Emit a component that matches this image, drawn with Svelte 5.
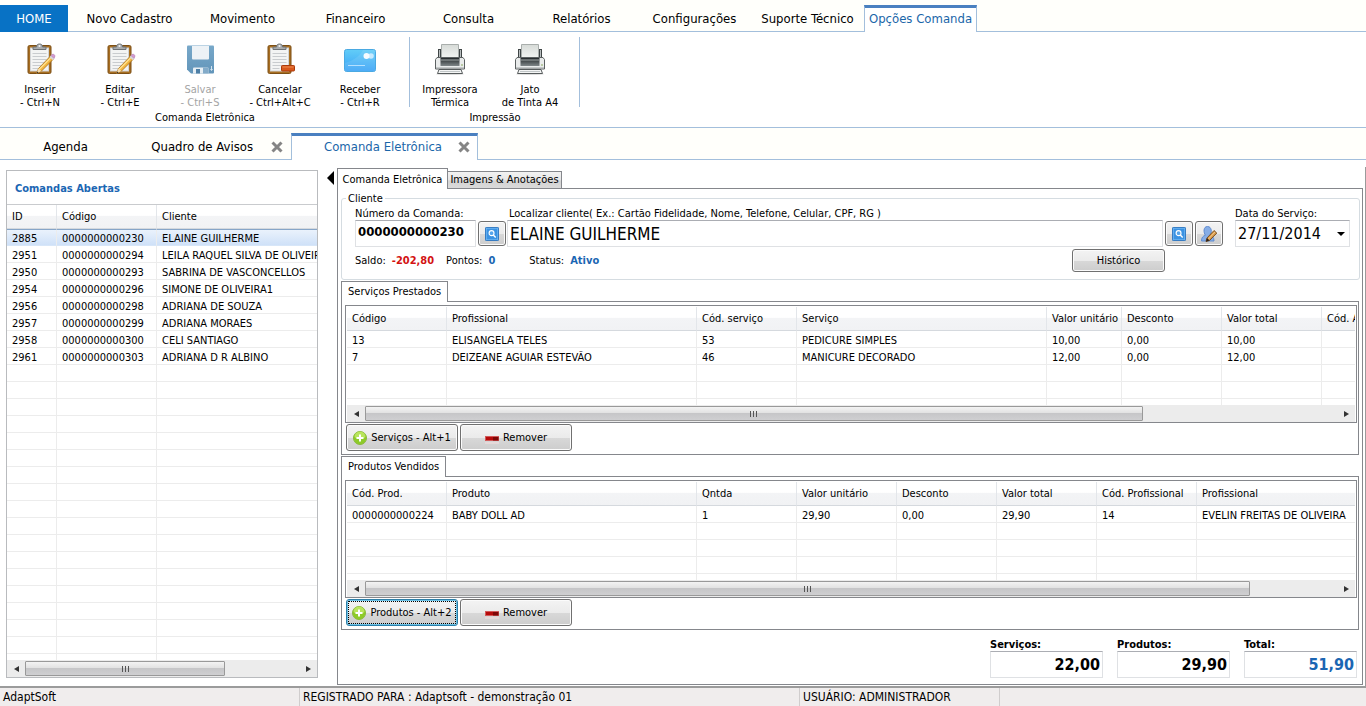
<script>
  const menus = ['Novo Cadastro', 'Movimento', 'Financeiro', 'Consulta', 'Relatórios', 'Configurações', 'Suporte Técnico'];

  const ribbon = [
    {
      caption: 'Comanda Eletrônica',
      actions: [
        { icon: 'edit', top: 'Inserir', bottom: '- Ctrl+N' },
        { icon: 'edit', top: 'Editar', bottom: '- Ctrl+E' },
        { icon: 'save', top: 'Salvar', bottom: '- Ctrl+S', disabled: true },
        { icon: 'cancel', top: 'Cancelar', bottom: '- Ctrl+Alt+C' },
        { icon: 'card', top: 'Receber', bottom: '- Ctrl+R' }
      ]
    },
    {
      caption: 'Impressão',
      actions: [
        { icon: 'printer', top: 'Impressora', bottom: 'Térmica' },
        { icon: 'printer', top: 'Jato', bottom: 'de Tinta A4' }
      ]
    }
  ];

  const orders = {
    columns: [['ID', 50], ['Código', 100], ['Cliente', 200]],
    rows: [
      ['2885', '0000000000230', 'ELAINE GUILHERME'],
      ['2951', '0000000000294', 'LEILA RAQUEL SILVA DE OLIVEIRA'],
      ['2950', '0000000000293', 'SABRINA DE VASCONCELLOS'],
      ['2954', '0000000000296', 'SIMONE DE OLIVEIRA1'],
      ['2956', '0000000000298', 'ADRIANA DE SOUZA'],
      ['2957', '0000000000299', 'ADRIANA MORAES'],
      ['2958', '0000000000300', 'CELI SANTIAGO'],
      ['2961', '0000000000303', 'ADRIANA D R ALBINO']
    ],
    blank: 60
  };

  const services = {
    columns: [['Código', 100], ['Profissional', 250], ['Cód. serviço', 100], ['Serviço', 250], ['Valor unitário', 75], ['Desconto', 100], ['Valor total', 100], ['Cód. A', 100]],
    rows: [
      ['13', 'ELISANGELA TELES', '53', 'PEDICURE SIMPLES', '10,00', '0,00', '10,00', ''],
      ['7', 'DEIZEANE AGUIAR ESTEVÃO', '46', 'MANICURE DECORADO', '12,00', '0,00', '12,00', '']
    ],
    blank: 3
  };

  const products = {
    columns: [['Cód. Prod.', 100], ['Produto', 250], ['Qntda', 100], ['Valor unitário', 100], ['Desconto', 100], ['Valor total', 100], ['Cód. Profissional', 100], ['Profissional', 250]],
    rows: [['0000000000224', 'BABY DOLL AD', '1', '29,90', '0,00', '29,90', '14', 'EVELIN FREITAS DE OLIVEIRA']],
    blank: 4
  };

  let selected = $state(0);
  let code = $state('0000000000230');
  let client = $state('ELAINE GUILHERME');
  let date = $state('27/11/2014');
</script>

{#snippet clipboard()}
  <rect x="4" y="2.500" width="23" height="28" rx="1.500" fill="#a86f22" stroke="#7d4f14" />
  <rect x="6.500" y="5" width="18" height="23" fill="#f3f4f4" stroke="#d2d4d6" />
  <path d="M8.500 10.500h14M8.500 13.500h14M8.500 16.500h14M8.500 19.500h14M8.500 22.500h9M8.500 25.500h7" stroke="#c9cccf" fill="none" />
  <path d="M9 6.500V4h3.500C12.500 2 13.500 1 15.500 1s3 1 3 3H22v2.500z" fill="#a9acae" stroke="#6f7376" />
  <circle cx="15.500" cy="3" r="1" fill="#f4f4f4" />
{/snippet}

{#snippet icon(name)}
  {#if name === 'edit'}
    <svg width="32" height="32" viewBox="0 0 32 32" aria-hidden="true">
      {@render clipboard()}
      <path d="M12.500 30.500l2-5L26 13.500l3 3L17.500 28z" fill="#f2b63f" stroke="#a56b16" stroke-width=".8" />
      <path d="M15 26.500L27 14.500" stroke="#ffe293" stroke-width="1.200" />
      <path d="M25.500 14l2-2 3 3-2 2z" fill="#d7d9dc" />
      <path d="M27 12.500l1-1c1.500-1 3.500.5 2.800 2.500L30 15.500z" fill="#d39ad0" stroke="#aa72aa" stroke-width=".5" />
      <path d="M12.500 30.500l2-5 3 2.500z" fill="#f6dcae" />
      <path d="M12.500 30.500l.8-2 1.300 1.200z" fill="#333" />
    </svg>
  {:else if name === 'cancel'}
    <svg width="32" height="32" viewBox="0 0 32 32" aria-hidden="true">
      {@render clipboard()}
      <rect x="17.500" y="22.500" width="13" height="5.500" rx=".8" fill="#d9581b" stroke="#a9390b" />
      <path d="M18.500 24h11" stroke="#ee8a50" />
    </svg>
  {:else if name === 'save'}
    <svg width="32" height="32" viewBox="0 0 32 32" aria-hidden="true">
      <defs>
        <linearGradient id="disk" x2="0" y2="1"><stop stop-color="#78a8c9" /><stop offset="1" stop-color="#6295ba" /></linearGradient>
      </defs>
      <path d="M3 3.500A1 1 0 014 2.500h25a1 1 0 011 1v26a1 1 0 01-1 1H7l-4-4z" fill="url(#disk)" />
      <path d="M8 3h17v12.500a1 1 0 01-1 1H9a1 1 0 01-1-1z" fill="#edf2f6" />
      <path d="M9 30.500V25.500a1 1 0 011-1h13.500a1 1 0 011 1v5z" fill="#e6eef4" />
      <rect x="12" y="26" width="4" height="4.500" fill="#4d7fa6" />
      <path d="M19 24.500h5.500v6H19z" fill="#83abc9" />
      <path d="M27.500 23v4M26.500 26l1 1.500 1-1.500" stroke="#d5e4ef" fill="none" />
    </svg>
  {:else if name === 'card'}
    <svg width="34" height="32" viewBox="0 0 34 32" aria-hidden="true">
      <defs>
        <linearGradient id="card" x2="0" y2="1"><stop stop-color="#62cdf8" /><stop offset="1" stop-color="#3aa2f6" /></linearGradient>
      </defs>
      <rect x="1.500" y="6.500" width="31" height="22" rx="2" fill="url(#card)" stroke="#4aa9e2" />
      <path d="M2 20C10 18 17 13 20 7h12v21H2z" fill="#fff" opacity=".1" />
      <circle cx="28" cy="13" r="2.800" fill="#c6eaff" />
      <circle cx="23.500" cy="13" r="3" fill="#f6fcff" />
      <path d="M5 22.500h17" stroke="#b4e0ff" />
    </svg>
  {:else if name === 'printer'}
    <svg width="32" height="32" viewBox="0 0 32 32" aria-hidden="true">
      <defs>
        <linearGradient id="sheet" x2="0" y2="1"><stop stop-color="#d6dad7" /><stop offset="1" stop-color="#f4f6f4" /></linearGradient>
        <linearGradient id="slot" x2="0" y2="1"><stop stop-color="#23282a" /><stop offset="1" stop-color="#7f8688" /></linearGradient>
      </defs>
      <ellipse cx="16" cy="31" rx="14" ry="1" fill="#ddd" />
      <path d="M4 6h4v9H4zM24 6h4v9h-4z" fill="#3f4546" />
      <path d="M5.500 7v8M26.500 7v8" stroke="#b9bebf" />
      <path d="M7.500 1.500h17V16h-17z" fill="url(#sheet)" stroke="#a9aeac" />
      <path d="M3 14.500h26l1.500 2V26h-29v-9.500z" fill="#e9ebeb" stroke="#5c6162" />
      <path d="M6.500 15h19v8h-19z" fill="url(#slot)" />
      <path d="M6.500 17h19" stroke="#a2a8a8" />
      <path d="M2 24.500h28" stroke="#c4c8c8" />
      <circle cx="28" cy="22" r=".8" fill="#7ba04a" />
      <path d="M5 26.500h22l1.500 4h-25z" fill="#f4f5f5" stroke="#565b5c" />
      <path d="M6 28.500h20" stroke="#c1c6c7" />
    </svg>
  {:else if name === 'search'}
    <svg width="14" height="14" viewBox="0 0 16 16" aria-hidden="true">
      <rect x=".5" y=".5" width="15" height="15" rx="1" fill="#3a92e2" stroke="#1c66b4" />
      <rect x="1.500" y="1.500" width="13" height="13" fill="none" stroke="#6db5f2" />
      <circle cx="7.500" cy="7" r="2.800" fill="#55a5ec" stroke="#fff" stroke-width="1.300" />
      <path d="M9.500 9.200l2.700 2.800" stroke="#fff" stroke-width="1.600" />
    </svg>
  {:else if name === 'user'}
    <svg width="18" height="18" viewBox="0 0 18 18" aria-hidden="true">
      <path d="M1.500 16c0-3.500 1.500-5 4-5.800C3.500 8 3 1.500 7.500 1.500S12 8 10 10.200c2.500.8 4 2.300 4 5.800z" fill="#86ade6" stroke="#5f8bd0" />
      <path d="M6 16.500l1-3.500 7-7.500 2.800 2.600-7.300 7.400z" fill="#d89a4a" stroke="#70461a" stroke-width=".9" />
      <path d="M6 16.500l1-3.500 2.500 2.500z" fill="#2b2118" />
      <path d="M8.500 14l6.500-7" stroke="#f3c98b" />
    </svg>
  {:else if name === 'plus'}
    <svg width="14" height="14" viewBox="0 0 14 14" aria-hidden="true">
      <circle cx="7" cy="7" r="6.500" fill="#8ecb28" stroke="#8ab93c" />
      <path d="M1.500 6a5.500 5.500 0 0111 0C10 8 4 8 1.500 6z" fill="#b9e55c" />
      <path d="M7 3.500v7M3.500 7h7" stroke="#fff" stroke-width="2" />
    </svg>
  {:else if name === 'minus'}
    <svg width="14" height="14" viewBox="0 0 14 14" aria-hidden="true">
      <path d="M0 12h14" stroke="#f7dede" />
      <rect x=".5" y="5.500" width="13" height="4" fill="#b50b0b" stroke="#d25a5a" />
      <rect x="8" y="6" width="5.500" height="3.500" fill="#7d0606" />
    </svg>
  {:else if name === 'close'}
    <svg width="12" height="12" viewBox="0 0 12 12" aria-hidden="true">
      <path d="M1.500 1.500l9 9M10.500 1.500l-9 9" stroke="#858585" stroke-width="3" />
    </svg>
  {/if}
{/snippet}

{#snippet scrollbar(share)}
  <div class="scrollbar">
    <button class="arrow" aria-label="Rolar à esquerda"><svg width="5" height="6" viewBox="0 0 5 6"><path d="M5 0v6L0 3z" fill="#333" /></svg></button>
    <div class="track">
      <div class="thumb" style:width="{share}%"><i></i><i></i><i></i></div>
    </div>
    <button class="arrow" aria-label="Rolar à direita"><svg width="5" height="6" viewBox="0 0 5 6"><path d="M0 0v6l5-3z" fill="#333" /></svg></button>
  </div>
{/snippet}

{#snippet grid(data, current, pick)}
  <table style:width="{data.columns.reduce((sum, c) => sum + c[1], 0)}px">
    <colgroup>
      {#each data.columns as c}<col style:width="{c[1]}px" />{/each}
    </colgroup>
    <thead>
      <tr>{#each data.columns as c}<th>{c[0]}</th>{/each}</tr>
    </thead>
    <tbody>
      {#each data.rows as row, r}
        <tr class:current={r === current} onclick={() => pick?.(r)}>
          {#each row as cell}<td>{cell}</td>{/each}
        </tr>
      {/each}
      {#each { length: data.blank } as _}
        <tr>{#each data.columns as c}<td></td>{/each}</tr>
      {/each}
    </tbody>
  </table>
{/snippet}

{#snippet section(title, data, share, addLabel, focused)}
  <section class="section">
    <h2 class="tab">{title}</h2>
    <div class="sheet">
      <div class="list">
        <div class="viewport">{@render grid(data, -1)}</div>
        {@render scrollbar(share)}
      </div>
      <div class="buttons">
        <button class="push" class:focused>{@render icon('plus')}{addLabel}</button>
        <button class="push">{@render icon('minus')}Remover</button>
      </div>
    </div>
  </section>
{/snippet}

<div class="window">
  <nav class="menu">
    <button class="home">HOME</button>
    {#each menus as m}<button>{m}</button>{/each}
    <button class="active">Opções Comanda</button>
  </nav>

  <div class="ribbon">
    {#each ribbon as group}
      <div class="group">
        <div class="actions">
          {#each group.actions as a}
            <button disabled={a.disabled}>
              {@render icon(a.icon)}
              <span>{a.top}<br />{a.bottom}</span>
            </button>
          {/each}
        </div>
        <div class="caption">{group.caption}</div>
      </div>
    {/each}
  </div>

  <div class="documents">
    <div class="doc agenda"><button>Agenda</button></div>
    <div class="doc notices"><button>Quadro de Avisos</button><button class="close" aria-label="Fechar Quadro de Avisos">{@render icon('close')}</button></div>
    <div class="doc active"><button>Comanda Eletrônica</button><button class="close" aria-label="Fechar Comanda Eletrônica">{@render icon('close')}</button></div>
  </div>

  <main>
    <aside>
      <h1>Comandas Abertas</h1>
      <div class="viewport">{@render grid(orders, selected, (r) => (selected = r))}</div>
      {@render scrollbar(73)}
    </aside>

    <button class="collapse" aria-label="Recolher lista"><svg width="7" height="14" viewBox="0 0 7 14"><path d="M7 0v14L0 7z" fill="#000" /></svg></button>

    <div class="work">
      <div class="tabs">
        <button class="tab">Comanda Eletrônica</button>
        <button class="tab back">Imagens &amp; Anotações</button>
      </div>
      <div class="page">
        <fieldset>
          <legend>Cliente</legend>
          <div class="fields">
            <div class="field">
              <label for="code">Número da Comanda:</label>
              <div class="line"><input id="code" class="code" bind:value={code} /><button class="push square" aria-label="Buscar comanda">{@render icon('search')}</button></div>
            </div>
            <div class="field grow">
              <label for="client">Localizar cliente( Ex.: Cartão Fidelidade, Nome, Telefone, Celular, CPF, RG )</label>
              <div class="line">
                <input id="client" class="big" bind:value={client} />
                <button class="push square" aria-label="Buscar cliente">{@render icon('search')}</button>
                <button class="push square" aria-label="Editar cliente">{@render icon('user')}</button>
              </div>
            </div>
            <div class="field date">
              <label for="date">Data do Serviço:</label>
              <div class="combo"><input id="date" class="big" bind:value={date} /><button aria-label="Abrir calendário"><svg width="8" height="4" viewBox="0 0 8 4"><path d="M0 0h8L4 4z" /></svg></button></div>
            </div>
          </div>
          <div class="info">
            <span>Saldo:</span><b class="debt">-202,80</b>
            <span class="points">Pontos:</span><b>0</b>
            <span class="status">Status:</span><b>Ativo</b>
            <button class="push history">Histórico</button>
          </div>
        </fieldset>

        {@render section('Serviços Prestados', services, 80, 'Serviços - Alt+1', false)}
        {@render section('Produtos Vendidos', products, 91, 'Produtos - Alt+2', true)}

        <div class="totals">
          <div><label for="ts">Serviços:</label><input id="ts" readonly value="22,00" /></div>
          <div><label for="tp">Produtos:</label><input id="tp" readonly value="29,90" /></div>
          <div><label for="tt">Total:</label><input id="tt" class="sum" readonly value="51,90" /></div>
        </div>
      </div>
    </div>
  </main>

  <footer>
    <span class="app">AdaptSoft</span>
    <span class="license">REGISTRADO PARA : Adaptsoft - demonstração 01</span>
    <span class="account">USUÁRIO: ADMINISTRADOR</span>
    <span></span>
  </footer>
</div>

<style>
  :global(body) { background: #fff; }
  .window, .window * { box-sizing: border-box; }
  .window {
    display: flex;
    flex-direction: column;
    min-height: 100vh;
    overflow: hidden;
    color: #000;
    font: 11px/13px "DejaVu Sans Condensed", "DejaVu Sans", sans-serif;
  }
  button, input { font: inherit; color: inherit; margin: 0; padding: 0; }
  button { border: 0; background: none; white-space: nowrap; }
  svg { display: block; flex: none; }
  h1, h2 { margin: 0; }

  .menu { display: flex; padding-top: 5px; background: #fffffb; border-bottom: 1px solid #a3bfdc; font-size: 13px; }
  .menu button { width: 113px; height: 27px; margin-bottom: -1px; }
  .menu .home { width: 68px; margin-right: 5px; background: #0872c5; color: #fff; }
  .menu .active { background: #fff; color: #1b66a9; border: solid #a3bfdc; border-width: 0 1px; border-top: 3px solid #4a80c0; padding-bottom: 4px; }

  .ribbon { display: flex; height: 96px; padding-top: 5px; border-bottom: 1px solid #a3bfdc; }
  .actions { display: flex; height: 70px; padding-right: 9px; border-right: 1px solid #a3bfdc; }
  .actions button { width: 80px; display: flex; flex-direction: column; align-items: center; gap: 8px; padding-top: 6px; }
  .actions button:disabled { color: #a4a4a4; }
  .caption { text-align: center; padding-top: 4px; }

  .documents { display: flex; height: 32px; padding-top: 5px; background: #fffffb; border-bottom: 1px solid #a3bfdc; font-size: 13px; }
  .doc { display: flex; align-items: center; gap: 18px; height: 27px; }
  .agenda { width: 131px; justify-content: center; }
  .notices { width: 160px; justify-content: flex-end; padding-right: 8px; }
  .doc.active { width: 187px; gap: 16px; justify-content: flex-end; padding-right: 7px; background: #fff; color: #1b66a9; border: solid #a3bfdc; border-width: 0 1px; border-top: 3px solid #4a80c0; padding-bottom: 3px; }

  main { display: flex; flex: 1; min-height: 521px; margin-top: 7px; padding: 0 2px 0 6px; border-right: 1px solid #9b9b9b; border-bottom: 2px solid #9b9b9b; }
  aside { display: flex; flex-direction: column; width: 312px; margin: 3px 0 8px; border: 1px solid #b9bbbe; }
  h1 { padding: 11px 8px 9px; border-bottom: 1px solid #c9cbce; font-size: 11px; line-height: 13px; color: #1b66b3; }
  .viewport { overflow: hidden; }
  aside .viewport { flex: 1 1 0; min-height: 0; }

  table { table-layout: fixed; border-collapse: separate; border-spacing: 0; }
  th { height: 24px; padding: 0 5px; text-align: left; font-weight: normal; background: linear-gradient(#fff 45%, #f3f4f6 50%, #f1f2f4); border-right: 1px solid #e3e6ea; border-bottom: 1px solid #d5d9de; white-space: nowrap; overflow: hidden; }
  td { height: 17px; padding: 3px 5px 0; border-right: 1px solid #ececec; border-bottom: 1px solid #ececec; white-space: nowrap; overflow: hidden; line-height: 13px; }
  .current td { padding-top: 2px; background: linear-gradient(#eaf2fc, #cfe1f8); border-top: 1px solid #86a5c8; border-bottom-color: #d7e6f8; }

  .scrollbar { display: flex; height: 17px; background: #ececec; flex: none; }
  .arrow { width: 18px; display: flex; align-items: center; justify-content: center; }
  .track { flex: 1; padding: 1px 0; }
  .thumb { display: flex; align-items: center; justify-content: center; gap: 2px; height: 15px; border: 1px solid #999; border-radius: 1px; background: linear-gradient(#f3f3f3, #e2e2e2 45%, #c6c6c8 50%, #cfcfd1); }
  .thumb i { width: 1px; height: 6px; background: #555; }

  .collapse { width: 19px; height: 22px; padding: 0 3px 0 9px; display: flex; align-items: center; }

  .work { flex: 1; min-width: 0; display: flex; flex-direction: column; padding: 1px 0; }
  .tabs { display: flex; align-items: flex-end; height: 21px; }
  .tab { position: relative; width: max-content; height: 21px; margin: 0 0 -1px; padding: 0 6px; background: #fff; border: 1px solid #85878c; border-bottom: 0; font-size: 11px; line-height: 19px; font-weight: normal; }
  .tabs .tab { height: 21px; width: 111px; padding: 0; margin: 0; z-index: 1; }
  .tabs .back { height: 18px; width: 114px; margin-bottom: 0; border-left: 0; border-bottom: 1px solid #85878c; background: linear-gradient(#f2f2f2, #e6e6e6 50%, #d3d3d3 55%, #dadada); line-height: 16px; }
  .page { flex: 1; margin-top: -1px; padding: 3px 2px 0 3px; border: 1px solid #85878c; }

  fieldset { min-width: 0; margin: 0; padding: 0 9px 6px 13px; border: 1px solid #d5dce1; border-radius: 3px; }
  legend { padding: 0 2px; margin-left: -9px; }
  .fields { display: flex; gap: 1px; margin-top: 2px; }
  .field { display: flex; flex-direction: column; }
  .grow { flex: 1; min-width: 0; }
  .grow label { padding-left: 2px; }
  .line { display: flex; gap: 2px; align-items: center; }
  .line input, .combo { height: 27px; border: 1px solid #dfe1e4; border-top-color: #abadb3; background: #fff; }
  .code { width: 121px; padding: 0 2px 4px; font-size: 13px; font-weight: bold; }
  .line .big { flex: 1; min-width: 0; font-size: 17px; }
  .big { padding: 0 2px; font-size: 16px; }
  .date { margin-left: 11px; }
  .combo { display: flex; width: 115px; }
  .combo input { width: 96px; border: 0; background: none; }
  .combo button { width: 17px; display: flex; align-items: center; justify-content: center; }
  .info { display: flex; align-items: center; height: 25px; margin-top: 1px; }
  .info b { padding-left: 6px; color: #1b66b3; }
  .info .debt { color: #d31212; }
  .points { margin-left: 12px; }
  .status { margin-left: 34px; }

  .push { display: inline-flex; align-items: center; justify-content: center; gap: 4px; width: 112px; height: 27px; border: 1px solid #707070; border-radius: 3px; background: linear-gradient(#f3f3f3, #ebebeb 50%, #d8d8d8 52%, #cdcdcd); box-shadow: inset 0 0 0 1px #fbfbfb; }
  .push.square { width: 28px; height: 25px; }
  .push.history { width: 93px; height: 23px; margin-left: auto; margin-right: 185px; }
  .push.focused { border-color: #2c7fa8; box-shadow: inset 0 0 0 1px #6ec3e8; outline: 1px dotted #000; outline-offset: -3px; }

  .section { margin: 1px 1px 0 0; }
  .sheet { border: 1px solid #85878c; padding: 3px 1px 3px 3px; }
  .list { border: 1px solid #85878c; padding: 1px 1px 0; }
  .section .viewport { height: 98px; }
  .buttons { display: flex; gap: 2px; padding: 1px 1px 0; }

  .totals { display: flex; justify-content: flex-end; gap: 14px; padding: 8px 3px 6px; font-weight: bold; }
  .totals div { display: flex; flex-direction: column; }
  .totals input { width: 113px; height: 27px; padding: 0 2px; border: 1px solid #dfe1e4; border-top-color: #abadb3; background: #fff; text-align: right; font-size: 16px; }
  .totals .sum { color: #1b66b3; }

  footer { display: flex; height: 18px; background: #f0eded; font-size: 12px; line-height: 19px; }
  footer span { padding-left: 3px; border-right: 1px solid #d0cdcd; white-space: nowrap; }
  footer span:last-child { border: 0; }
  .app { width: 300px; }
  .license { width: 500px; }
  .account { width: 200px; }
</style>
